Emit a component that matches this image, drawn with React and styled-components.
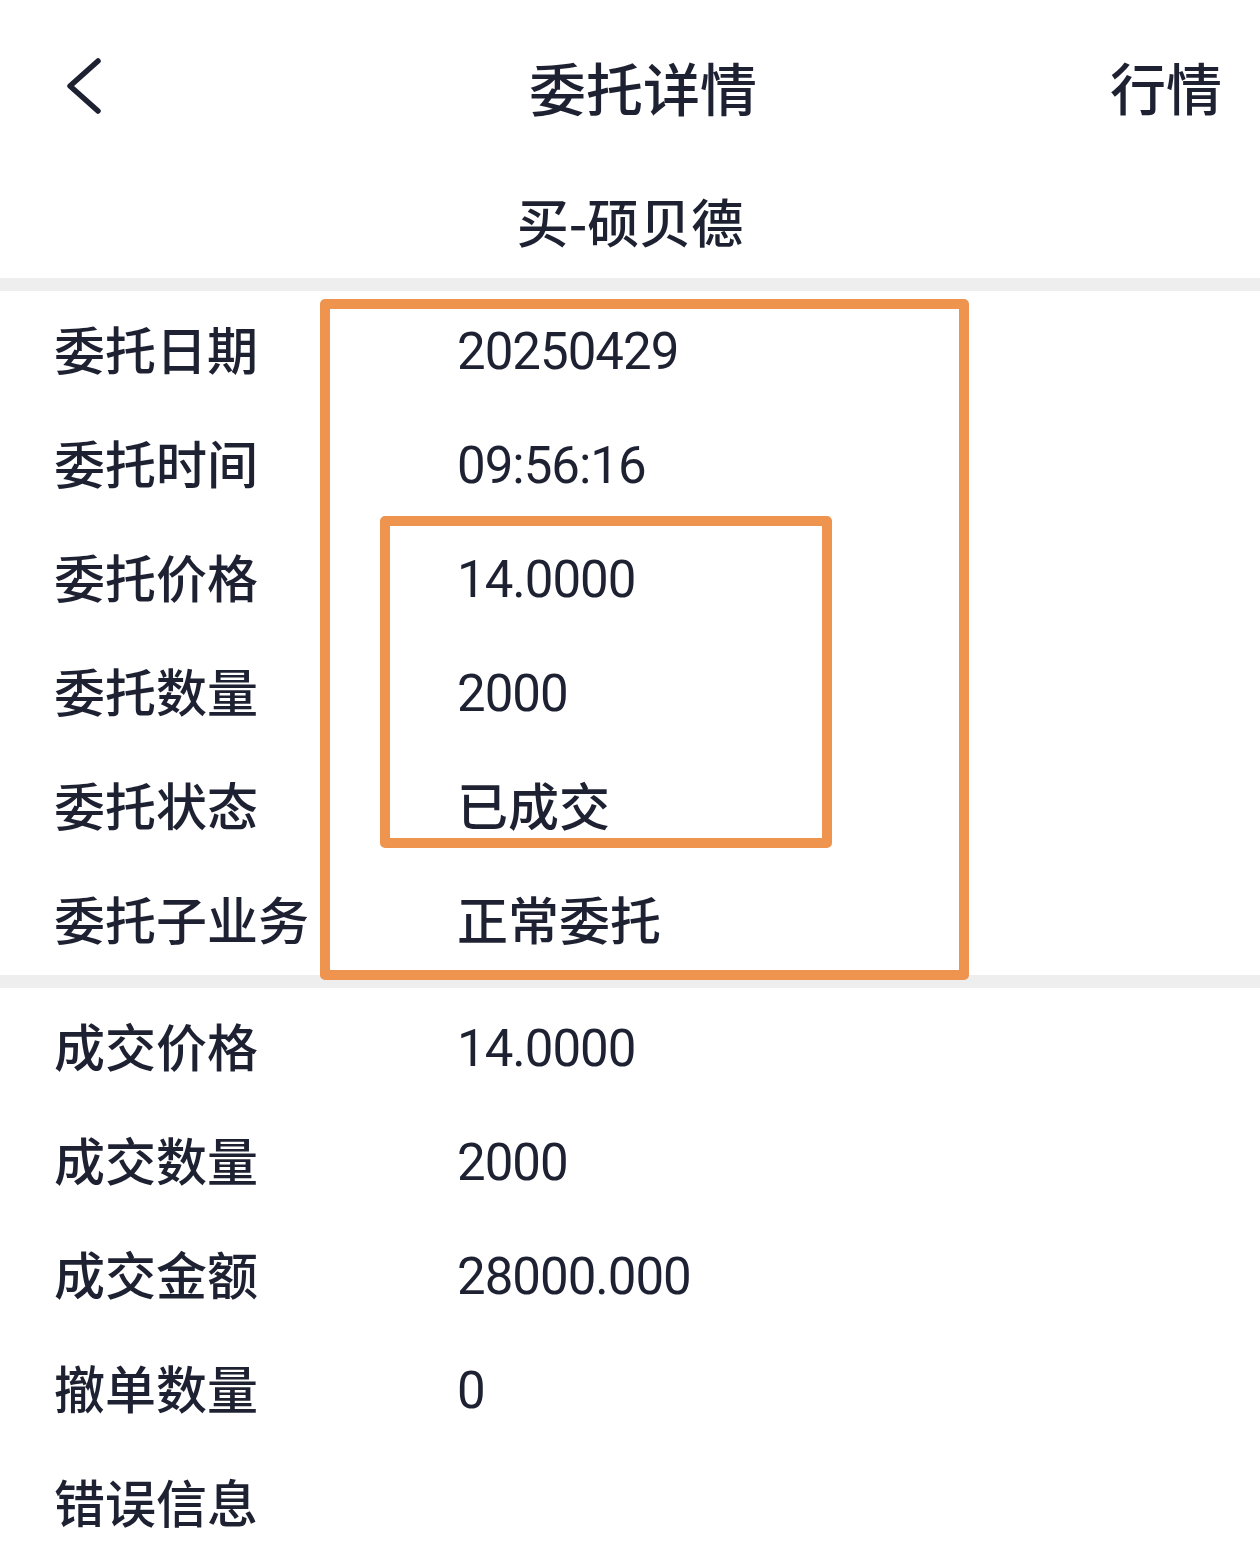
import React from "react";
import styled, { createGlobalStyle } from "styled-components";

const Global = createGlobalStyle`
  html, body { margin: 0; padding: 0; background: #ffffff; }
  body { font-family: "Noto Sans CJK SC", "Noto Sans", sans-serif; color: #1d2131; }
`;

const Page = styled.div`
  position: relative;
  width: 1260px;
  background: #fff;
`;

const NavBar = styled.div`
  height: 176px;
  display: grid;
  grid-template-columns: 1fr auto 1fr;
  align-items: center;
  padding: 0 38px 0 62px;
`;

const BackBtn = styled.div`
  display: flex;
  align-items: center;
  justify-self: start;
  margin-top: -4px;
`;

const Title = styled.div`
  font-size: 57px;
  font-weight: 500;
  color: #1d2131;
  line-height: 1;
  margin-left: 2px;
  padding-bottom: 4px;
`;

const Action = styled.div`
  justify-self: end;
  font-size: 56px;
  font-weight: 500;
  line-height: 1;
  padding-bottom: 4px;
`;

const SubTitle = styled.div`
  height: 102px;
  display: flex;
  justify-content: center;
  align-items: center;
  padding-bottom: 12px;
  box-sizing: border-box;
  font-size: 52px;
  font-weight: 500;
  line-height: 1;
`;

const Divider = styled.div`
  height: 13px;
  background: #eeeeee;
`;

const Group = styled.div`
  display: flex;
  flex-direction: column;
`;

const Row = styled.div`
  height: 114px;
  display: grid;
  grid-template-columns: 403px 1fr;
  align-items: center;
  padding-left: 54px;
`;

const Label = styled.div`
  font-size: 51px;
  font-weight: 500;
  line-height: 1;
  white-space: nowrap;
  padding-top: 0;
`;

const Value = styled.div`
  font-family: ${(p) => (p.$num ? '"Roboto", "Noto Sans CJK SC", sans-serif' : '"Noto Sans CJK SC", sans-serif')};
  font-size: 51px;
  font-weight: ${(p) => (p.$num ? 400 : 500)};
  letter-spacing: ${(p) => (p.$num ? "-1px" : "0")};
  line-height: 1;
  padding-top: ${(p) => (p.$num ? "6px" : "1px")};
`;

const Mark = styled.div`
  position: absolute;
  left: ${(p) => p.$l}px;
  top: ${(p) => p.$t}px;
  width: ${(p) => p.$w}px;
  height: ${(p) => p.$h}px;
  border: 10px solid #ef944f;
  border-radius: 5px;
  box-sizing: border-box;
  pointer-events: none;
`;

const entrust = [
  ["委托日期", "20250429", true],
  ["委托时间", "09:56:16", true],
  ["委托价格", "14.0000", true],
  ["委托数量", "2000", true],
  ["委托状态", "已成交", false],
  ["委托子业务", "正常委托", false],
];

const deal = [
  ["成交价格", "14.0000", true],
  ["成交数量", "2000", true],
  ["成交金额", "28000.000", true],
  ["撤单数量", "0", true],
  ["错误信息", "", false],
];

export default function App() {
  return (
    <>
      <Global />
      <Page>
        <NavBar>
          <BackBtn>
            <svg width="44" height="60" viewBox="0 0 44 60">
              <polyline
                points="36,5 8,30 36,55"
                fill="none"
                stroke="#1d2131"
                strokeWidth="5.5"
                strokeLinecap="round"
                strokeLinejoin="round"
              />
            </svg>
          </BackBtn>
          <Title>委托详情</Title>
          <Action>行情</Action>
        </NavBar>
        <SubTitle>买-硕贝德</SubTitle>
        <Divider />
        <Group>
          {entrust.map(([l, v, n]) => (
            <Row key={l}>
              <Label>{l}</Label>
              <Value $num={n}>{v}</Value>
            </Row>
          ))}
        </Group>
        <Divider />
        <Group>
          {deal.map(([l, v, n]) => (
            <Row key={l}>
              <Label>{l}</Label>
              <Value $num={n}>{v}</Value>
            </Row>
          ))}
        </Group>
        <Mark $l={320} $t={299} $w={649} $h={681} />
        <Mark $l={380} $t={516} $w={452} $h={332} />
      </Page>
    </>
  );
}
